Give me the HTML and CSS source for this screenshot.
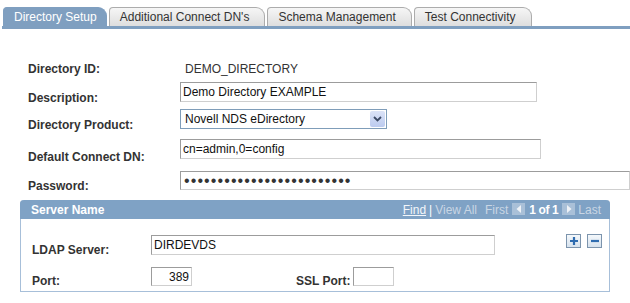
FILE: index.html
```html
<!DOCTYPE html>
<html>
<head>
  <meta charset="UTF-8">
  <title>Directory Setup</title>
  <link rel="stylesheet" href="styles.css">
</head>
<body>
  <div class="tabs">
    <div class="tab active">Directory Setup</div>
    <div class="tab">Additional Connect DN's</div>
    <div class="tab">Schema Management</div>
    <div class="tab">Test Connectivity</div>
  </div>
  <div class="tab-bar"></div>

  <div class="form">
    <div class="row row-id">
      <label>Directory ID:</label>
      <span class="value">DEMO_DIRECTORY</span>
    </div>
    <div class="row row-desc">
      <label>Description:</label>
      <input type="text" class="field field-desc" value="Demo Directory EXAMPLE">
    </div>
    <div class="row row-product">
      <label>Directory Product:</label>
      <div class="dropdown">
        <span class="dropdown-text">Novell NDS eDirectory</span>
        <span class="dropdown-btn">
          <svg width="9" height="6" viewBox="0 0 9 6"><path d="M1 1 L4.5 4.5 L8 1" fill="none" stroke="#3c4a66" stroke-width="1.8"/></svg>
        </span>
      </div>
    </div>
    <div class="row row-dn">
      <label>Default Connect DN:</label>
      <input type="text" class="field field-dn" value="cn=admin,0=config">
    </div>
    <div class="row row-pass">
      <label>Password:</label>
      <input type="password" class="field field-pass" value="xxxxxxxxxxxxxxxxxxxxxxxxx">
    </div>
  </div>

  <div class="grid-box">
    <div class="grid-head">
      <span class="grid-title">Server Name</span>
      <div class="grid-nav">
        <a class="nav-link">Find</a>
        <span class="nav-sep">|</span>
        <span class="nav-off">View All</span>
        <span class="nav-off nav-first">First</span>
        <span class="nav-arrow">
          <svg width="6" height="8" viewBox="0 0 6 8"><path d="M5 0 L0.5 4 L5 8 Z" fill="#eef2f7"/></svg>
        </span>
        <span class="nav-count">1 of 1</span>
        <span class="nav-arrow">
          <svg width="6" height="8" viewBox="0 0 6 8"><path d="M1 0 L5.5 4 L1 8 Z" fill="#eef2f7"/></svg>
        </span>
        <span class="nav-off">Last</span>
      </div>
    </div>
    <div class="grid-body">
      <div class="grid-row row-ldap">
        <label>LDAP Server:</label>
        <input type="text" class="field field-ldap" value="DIRDEVDS">
        <div class="row-buttons">
          <span class="sq-btn">
            <svg width="10" height="10" viewBox="0 0 10 10"><path d="M5 1 V9 M1 5 H9" stroke="#2f6cb0" stroke-width="2.2"/></svg>
          </span>
          <span class="sq-btn">
            <svg width="10" height="10" viewBox="0 0 10 10"><path d="M1 5 H9" stroke="#2f6cb0" stroke-width="2.2"/></svg>
          </span>
        </div>
      </div>
      <div class="grid-row row-port">
        <label>Port:</label>
        <input type="text" class="field field-port" value="389">
        <label class="ssl-label">SSL Port:</label>
        <input type="text" class="field field-ssl" value="">
      </div>
    </div>
  </div>
</body>
</html>
```

FILE: styles.css
```css
body {
  margin: 0;
  background-color: white;
  font-family: "Liberation Sans", Arial, sans-serif;
  font-size: 12px;
  color: #333;
  width: 630px;
  height: 303px;
  overflow: hidden;
}
.tabs {
  display: flex;
  gap: 2px;
  padding: 7px 0 0 3px;
}
.tab {
  height: 18px;
  line-height: 19px;
  padding: 0 15px 0 10px;
  border: 1px solid #acacac;
  border-bottom: none;
  border-radius: 4px 9px 0 0;
  background: linear-gradient(#f6f6f6, #dedede);
  color: #333;
  white-space: nowrap;
}
.tab.active {
  background: #7f9fc0;
  border-color: #7f9fc0;
  color: white;
  padding-right: 9px;
}
.tab-bar {
  height: 3px;
  margin-left: 2px;
  background-color: #7f9fc0;
}

.form {
  padding: 33px 0 0 28px;
}
.row {
  display: flex;
  align-items: flex-end;
}
.row label {
  width: 152px;
  flex: none;
  font-weight: bold;
  line-height: 14px;
  margin-bottom: -3px;
}
.row-id {
  align-items: flex-start;
}
.row-id label {
  margin-bottom: 0;
}
.row-id .value {
  padding-left: 5px;
  line-height: 14px;
}
.row-desc { margin-top: 6px; }
.row-product { margin-top: 7px; }
.row-dn { margin-top: 10px; }
.row-dn label { margin-bottom: -5px; }
.row-pass { margin-top: 12px; }

.field {
  box-sizing: border-box;
  height: 20px;
  margin: 0;
  padding: 0 2px;
  border: 1px solid;
  border-color: #9c9c9c #cfcfcf #cfcfcf #9c9c9c;
  font-family: "Liberation Sans", Arial, sans-serif;
  font-size: 12px;
  color: #111;
  background: white;
  outline: none;
}
.field-desc { width: 357px; }
.field-dn { width: 361px; }
.field-pass {
  width: 470px;
  height: 19px;
  padding-left: 3px;
  font-size: 16px;
  letter-spacing: 1.1px;
  color: #333;
}

.dropdown {
  box-sizing: border-box;
  width: 207px;
  height: 20px;
  display: flex;
  align-items: center;
  justify-content: space-between;
  border: 1px solid #7f9db9;
  padding: 0 1px 0 4px;
  background: white;
  color: #111;
}
.dropdown-btn {
  width: 15px;
  height: 16px;
  display: flex;
  align-items: center;
  justify-content: center;
  background: linear-gradient(#dbe3f7, #bccbef);
  border-radius: 2px;
}

.grid-box {
  margin: 10px 0 0 20px;
  width: 590px;
  box-sizing: border-box;
  border: 1px solid #a7bfd9;
  border-top: none;
  border-radius: 4px 4px 0 0;
}
.grid-head {
  height: 19px;
  background-color: #7fa2c5;
  display: flex;
  justify-content: space-between;
  align-items: center;
  padding: 0 9px 0 11px;
  margin: 0 -1px;
  border-radius: 4px 4px 0 0;
}
.grid-title {
  color: white;
  font-weight: bold;
}
.grid-nav {
  display: flex;
  align-items: center;
  gap: 3px;
  color: #c9d6e4;
}
.nav-link {
  color: #f2f6fa;
  text-decoration: underline;
}
.nav-sep {
  color: white;
}
.nav-first {
  margin-left: 5px;
  margin-right: 1px;
}
.nav-arrow {
  width: 13px;
  height: 12px;
  background: #a9c0d8;
  display: flex;
  align-items: center;
  justify-content: center;
  margin-top: -2px;
}
.nav-count {
  color: white;
  font-weight: bold;
  letter-spacing: -0.4px;
  margin: 0 1px;
}

.grid-body {
  padding: 16px 7px 5px 11px;
}
.grid-row {
  display: flex;
  align-items: flex-end;
}
.grid-row label {
  width: 119px;
  flex: none;
  font-weight: bold;
  line-height: 14px;
  margin-bottom: -2px;
}
.field-ldap { width: 344px; }
.row-buttons {
  margin-left: auto;
  align-self: flex-start;
  margin-top: -1px;
  display: flex;
  gap: 6px;
}
.sq-btn {
  box-sizing: border-box;
  width: 15px;
  height: 14px;
  border: 1px solid #7c94ad;
  background: linear-gradient(#f4f8fb, #d6e2ee);
  display: flex;
  align-items: center;
  justify-content: center;
}
.row-port {
  margin-top: 12px;
}
.field-port {
  width: 41px;
  height: 19px;
  text-align: right;
}
.row-port .ssl-label {
  width: auto;
  margin-left: 104px;
  margin-right: 3px;
}
.field-ssl {
  width: 41px;
  height: 19px;
}
```
